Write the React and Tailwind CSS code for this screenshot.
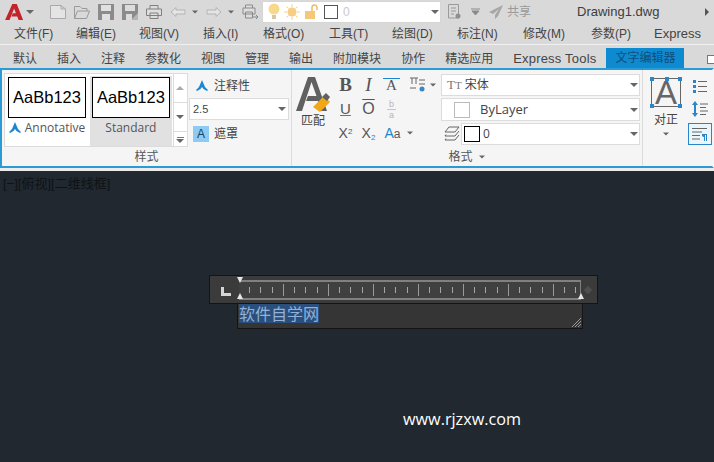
import React from "react";

const menus = [
  { label: "文件(F)", w: "w-[62px]" },
  { label: "编辑(E)", w: "w-[63px]" },
  { label: "视图(V)", w: "w-[64px]" },
  { label: "插入(I)", w: "w-[60px]" },
  { label: "格式(O)", w: "w-[66px]" },
  { label: "工具(T)", w: "w-[63px]" },
  { label: "绘图(D)", w: "w-[65px]" },
  { label: "标注(N)", w: "w-[66px]" },
  { label: "修改(M)", w: "w-[68px]" },
  { label: "参数(P)", w: "w-[63px]" },
  { label: "Express", w: "w-[60px] text-[13px]" },
];
const tabs = ["默认", "插入", "注释", "参数化", "视图", "管理", "输出", "附加模块", "协作", "精选应用", "Express Tools"];

function Caret({ className = "" }) {
  return <span className={`block w-0 h-0 border-x-[4px] border-x-transparent border-t-[4px] border-t-[#666] ${className}`} />;
}

function Svg({ w = 16, h = 16, children, className = "" }) {
  return (
    <svg width={w} height={h} viewBox={`0 0 ${w} ${h}`} fill="none" className={`block shrink-0 ${className}`}>
      {children}
    </svg>
  );
}

function AnnoIcon({ size = 12 }) {
  return (
    <svg width={size} height={size} viewBox="0 0 12 12" className="block shrink-0">
      <path d="M6 0 L9 7 L12 10 L11 11 L7.5 9 L6 7 L4.5 9 L1 11 L0 10 L3 7 Z" fill="#1b87d1" />
    </svg>
  );
}

function QuickBar() {
  return (
    <div className="flex items-center h-[23px]">
      <svg width="20" height="18" viewBox="0 0 22 20" className="block ml-[5px] shrink-0">
        <path d="M0 19 L8 1 L13 1 L20 19 L15 19 L13.5 15 L7 15 L8.5 11.5 L12 11.5 L10 6 L5 19 Z" fill="#c3242b" />
      </svg>
      <Caret className="ml-[1px]" />
      <Svg w={16} h={14} className="ml-[16px]">
        <path d="M0.5 0.5 H11 L15.5 4 V13.5 H0.5 Z M11 0.5 V4 H15.5" stroke="#a9a9a9" fill="#e4e4e4" />
      </Svg>
      <Svg w={16} h={14} className="ml-[8px]">
        <path d="M0.5 13.5 V1.5 H6 L8 3.5 H13 V6 M0.5 13.5 L3.5 6 H15.5 L12.5 13.5 Z" stroke="#9a9a9a" />
      </Svg>
      <Svg w={16} h={16} className="ml-[8px]">
        <path d="M0 0 H16 V16 H0 Z" fill="#8b8b8b" />
        <path d="M3 1 H13 V7 H3 Z M4 10 H12 V16 H4 Z" fill="#e0e0e0" />
      </Svg>
      <Svg w={16} h={16} className="ml-[8px]">
        <path d="M0 0 H16 V16 H0 Z" fill="#8b8b8b" />
        <path d="M3 1 H13 V7 H3 Z M4 10 H10 V16 H4 Z" fill="#dcdcdc" />
        <path d="M10 15 L16 9 V16 H10 Z" fill="#b5b5b5" />
      </Svg>
      <Svg w={16} h={16} className="ml-[8px]">
        <path d="M4 5 V1.5 H12 V5 M0.5 5 H15.5 V11.5 H0.5 Z M4 9 H12 V14.5 H4 Z" stroke="#808080" fill="#dedede" />
      </Svg>
      <Svg w={16} h={12} className="ml-[8px]">
        <path d="M1 6 L6 1.5 V4 H15 V8 H6 V10.5 Z" stroke="#b4b4b4" fill="#e4e4e4" />
      </Svg>
      <Caret className="ml-[5px] scale-75" />
      <Svg w={16} h={12} className="ml-[7px]">
        <path d="M15 6 L10 1.5 V4 H1 V8 H10 V10.5 Z" stroke="#b4b4b4" fill="#e4e4e4" />
      </Svg>
      <Caret className="ml-[5px] scale-75" />
      <Svg w={16} h={16} className="ml-[7px]">
        <path d="M3.5 4 V1 H10.5 V4 M1 4 H13 V10 H1 Z M3.5 8 H10.5 V14 H3.5 Z" stroke="#8a8a8a" fill="#dedede" />
        <path d="M11 13 H16 M14 11 L16 13 L14 15" stroke="#7b8b99" />
      </Svg>
      <div className="ml-[4px] w-[179px] h-[22px] bg-white border border-[#d6d6d6] flex items-center shrink-0">
        <Svg w={14} h={17} className="ml-[4px]">
          <circle cx="7" cy="6" r="5.5" fill="#f8d98c" />
          <path d="M5 12 H9 V16 H5 Z" fill="#d3c7a6" />
        </Svg>
        <Svg w={16} h={16} className="ml-[3px]">
          <circle cx="8" cy="8" r="4.5" fill="#f7cf84" />
          <path d="M8 0 V3 M8 13 V16 M0 8 H3 M13 8 H16 M2.5 2.5 L4.5 4.5 M11.5 11.5 L13.5 13.5 M13.5 2.5 L11.5 4.5 M4.5 11.5 L2.5 13.5" stroke="#f7cf84" />
        </Svg>
        <Svg w={15} h={16} className="ml-[4px]">
          <path d="M1 7 H11 V15 H1 Z" fill="#f4c878" />
          <path d="M8 7 V3.5 A2.5 2.5 0 0 1 13 3.5 V6" stroke="#eebb62" strokeWidth="1.5" />
        </Svg>
        <span className="ml-[5px] w-[14px] h-[14px] border border-[#555] bg-white shrink-0" />
        <span className="ml-[5px] text-[12px] text-[#c9c9c9]">0</span>
        <Caret className="ml-auto mr-[1px]" />
      </div>
      <Svg w={15} h={17} className="ml-[6px]">
        <path d="M1.5 1.5 H11.5 V15 H1.5 Z M4 5 H9 M4 8 H9 M4 11 H7" stroke="#9a9a9a" />
        <circle cx="11" cy="13" r="2.5" fill="#8f8f8f" />
      </Svg>
      <Svg w={9} h={8} className="ml-[9px]">
        <path d="M0 1 H9 M1 3 H8 L4.5 7 Z" stroke="#8a8a8a" fill="#8a8a8a" />
      </Svg>
      <Svg w={14} h={14} className="ml-[9px]">
        <path d="M14 0 L0 7 L4 9 L10 4 L6 10 L6 14 L9 11 Z" fill="#a6a6a6" />
      </Svg>
      <span className="ml-[4px] text-[12px] text-[#9a9a9a] whitespace-nowrap">共享</span>
      <span className="ml-[46px] text-[13px] text-[#3d3d3d] whitespace-nowrap">Drawing1.dwg</span>
      <span className="ml-auto mr-[5px] w-0 h-0 border-y-[4px] border-y-transparent border-l-[4px] border-l-[#555]" />
    </div>
  );
}

function MenuBar() {
  return (
    <div className="flex items-center h-[22px] pl-[14px] border-b border-[#f0f0f0] text-[12px] text-[#444] whitespace-nowrap">
      {menus.map((m) => (
        <span key={m.label} className={`block shrink-0 ${m.w}`}>{m.label}</span>
      ))}
    </div>
  );
}

function TabBar() {
  return (
    <div className="flex items-end h-[23px] pl-[13px] text-[12px] text-[#444] whitespace-nowrap">
      <div className="flex gap-[20px] h-[19px] items-center">
        {tabs.map((t) => (
          <span key={t} className={t === "Express Tools" ? "text-[13px] tracking-[0.2px]" : ""}>{t}</span>
        ))}
      </div>
      <span className="ml-[10px] w-[78px] h-[20px] bg-[#0e8ad1] text-[#0f4f7a] flex items-center justify-center shrink-0">文字编辑器</span>
      <span className="ml-[23px] mb-[4px] w-[12px] h-[9px] border border-[#777] bg-white shrink-0" />
    </div>
  );
}

function StyleCard({ label, active, anno }) {
  return (
    <div className={`w-[82px] h-[70px] px-[2px] pt-[1px] flex flex-col items-center ${active ? "bg-[#e1e1e1]" : ""}`}>
      <div className="w-[78px] h-[41px] bg-white border border-black flex items-center justify-center text-[16.5px] text-black font-['Liberation_Sans',sans-serif]">
        AaBb123
      </div>
      <div className="mt-[1px] flex items-center gap-[4px] text-[12px] text-[#555] font-['Open_Sans',sans-serif]">
        {anno && <AnnoIcon />}
        {label}
      </div>
    </div>
  );
}

function StylePanel() {
  return (
    <div className="w-[290px] shrink-0 border-r border-[#dcdcdc] flex flex-col">
      <div className="flex h-[80px] pt-[3px] pl-[2px]">
        <div className="w-[184px] h-[74px] border border-[#dcdcdc] bg-white flex pt-[2px] pl-[1px] overflow-hidden shrink-0">
          <StyleCard label="Annotative" anno />
          <div className="w-[2px]" />
          <StyleCard label="Standard" active />
          <div className="ml-[1px] -mt-[2px] w-[15px] h-[74px] flex flex-col border-l border-[#dcdcdc]">
            <div className="h-[29px] border-b border-[#dcdcdc] flex items-center justify-center">
              <span className="w-0 h-0 border-x-[4px] border-x-transparent border-b-[4px] border-b-[#aaa]" />
            </div>
            <div className="h-[29px] border-b border-[#dcdcdc] flex items-center justify-center"><Caret /></div>
            <div className="flex-1 flex flex-col items-center justify-center gap-[1px]">
              <span className="w-[7px] h-px bg-[#777]" />
              <Caret />
            </div>
          </div>
        </div>
        <div className="ml-px w-[100px] flex flex-col">
          <div className="h-[25px] flex items-center pl-[7px] gap-[6px] text-[12px] text-[#444]">
            <AnnoIcon />
            注释性
          </div>
          <div className="h-[22px] border border-[#dcdcdc] bg-white flex items-center pl-[3px] pr-[2px] text-[11px] text-[#444]">
            2.5
            <Caret className="ml-auto" />
          </div>
          <div className="mt-[4px] h-[20px] flex items-center pl-[4px] gap-[5px] text-[12px] text-[#444]">
            <span className="w-[16px] h-[16px] bg-[#8ecbf3] flex items-center justify-center text-[#1a3f60] text-[12px] font-['Liberation_Sans',sans-serif]">A</span>
            遮罩
          </div>
        </div>
      </div>
      <div className="flex-1 flex items-center justify-center text-[12px] text-[#555] pt-[1px]">样式</div>
    </div>
  );
}

function SmallBtn({ children }) {
  return <div className="w-[23px] h-[24px] flex items-center justify-center text-[#555] font-['Liberation_Serif',serif]">{children}</div>;
}

function Combo({ children, h = "h-[22px]" }) {
  return (
    <div className={`${h} border border-[#dcdcdc] bg-white flex items-center text-[12px] text-[#444]`}>
      {children}
      <Caret className="ml-auto mr-[1px]" />
    </div>
  );
}

function FormatPanel() {
  return (
    <div className="w-[351px] shrink-0 border-r border-[#dcdcdc] flex flex-col">
      <div className="flex h-[80px]">
        <div className="w-[42px] shrink-0 flex flex-col items-center pt-[6px]">
          <svg width="34" height="36" viewBox="0 0 34 36" className="block">
            <path d="M0 35 L12 1 L19 1 L31 35 L25 35 L22 25 L10 25 L12 20 L20.5 20 L15.5 6 L6 35 Z" fill="#606060" />
            <path d="M17 31 L28 20 L34 26 L24 36 Z" fill="#f0a818" />
            <path d="M26 21 L30 17 L34 21 L31 25 Z" fill="#606060" />
          </svg>
          <span className="text-[12px] text-[#444]">匹配</span>
        </div>
        <div className="w-[107px] shrink-0 pt-[3px] flex flex-col">
          <div className="flex h-[24px] items-center">
            <SmallBtn><span className="text-[19px] font-bold">B</span></SmallBtn>
            <SmallBtn><span className="text-[19px] italic">I</span></SmallBtn>
            <SmallBtn><span className="text-[15px] border-t border-[#1b87d1] leading-[13px] px-[3px]">A</span></SmallBtn>
            <Svg w={18} h={18} className="ml-[6px]">
              <path d="M1 2 H9 M3 2 V8 M7 2 V8 M10 4 H16 M10 8 H16 M1 12 H7" stroke="#666" />
              <circle cx="13" cy="13" r="2.5" fill="#3a87c4" />
            </Svg>
            <Caret className="ml-[2px] scale-75" />
          </div>
          <div className="flex h-[24px] items-center">
            <SmallBtn><span className="text-[15px] underline decoration-[#1b87d1] font-['Liberation_Sans',sans-serif]">U</span></SmallBtn>
            <SmallBtn><span className="text-[16px] overline font-['Liberation_Sans',sans-serif]">O</span></SmallBtn>
            <div className="w-[23px] flex flex-col items-center text-[9px] leading-[8px] text-[#b5b5b5] font-['Liberation_Sans',sans-serif]">
              <span className="border-b border-[#c5c5c5] px-[2px] pb-[1px]">b</span>
              <span className="pt-[1px]">a</span>
            </div>
          </div>
          <div className="flex h-[24px] items-center font-['Liberation_Sans',sans-serif] text-[#555]">
            <SmallBtn><span className="font-['Liberation_Sans',sans-serif] text-[14px]">X<sup className="text-[8px]">2</sup></span></SmallBtn>
            <SmallBtn><span className="font-['Liberation_Sans',sans-serif] text-[14px]">X<sub className="text-[8px] text-[#1b87d1]">2</sub></span></SmallBtn>
            <div className="w-[25px] text-[14px] flex items-baseline justify-center"><span className="text-[#1b87d1]">A</span><span className="text-[12px]">a</span></div>
            <Caret className="ml-[1px] scale-75" />
          </div>
        </div>
        <div className="w-[199px] shrink-0 pt-[4px] flex flex-col gap-[2px]">
          <Combo>
            <span className="ml-[5px] text-[13px] text-[#777] font-['Liberation_Serif',serif]">T<span className="text-[11px]">T</span></span>
            <span className="ml-[3px]">宋体</span>
          </Combo>
          <Combo h="h-[23px]">
            <span className="ml-[12px] w-[16px] h-[16px] border border-[#bbb] bg-white" />
            <span className="ml-[10px] text-[13px] font-['Open_Sans',sans-serif]">ByLayer</span>
          </Combo>
          <div className="flex h-[22px]">
            <Svg w={16} h={15} className="ml-[3px] mr-[1px] mt-[3px]">
              <path d="M5 1 H15 L11 6 H1 Z" stroke="#666" />
              <path d="M2 8.5 L1 10 H11 L15 5" stroke="#666" />
              <path d="M2 12.5 L1 14 H11 L15 9" stroke="#666" />
            </Svg>
            <div className="flex-1">
              <Combo>
                <span className="ml-[2px] w-[16px] h-[16px] border border-black bg-white" />
                <span className="ml-[3px] font-['Open_Sans',sans-serif]">0</span>
              </Combo>
            </div>
          </div>
        </div>
      </div>
      <div className="flex-1 flex items-center justify-center gap-[5px] text-[12px] text-[#555]">
        格式
        <Caret className="scale-75" />
      </div>
    </div>
  );
}

function ParagraphPanel() {
  return (
    <div className="flex-1 flex pl-[4px]">
      <div className="w-[38px] flex flex-col items-center pt-[8px]">
        <div className="relative w-[30px] h-[29px] border border-[#666] flex items-center justify-center text-[33px] leading-none text-[#666] font-['Liberation_Sans',sans-serif]">
          A
          <span className="absolute -left-[2px] -top-[2px] w-[4px] h-[4px] bg-[#2a86c8]" />
          <span className="absolute left-[13px] -top-[2px] w-[4px] h-[4px] bg-[#2a86c8]" />
          <span className="absolute -right-[2px] -top-[2px] w-[4px] h-[4px] bg-[#2a86c8]" />
          <span className="absolute -left-[2px] -bottom-[2px] w-[4px] h-[4px] bg-[#2a86c8]" />
          <span className="absolute -right-[2px] -bottom-[2px] w-[4px] h-[4px] bg-[#2a86c8]" />
        </div>
        <span className="mt-[6px] text-[12px] leading-[14px] text-[#444]">对正</span>
        <Caret className="mt-[5px] scale-75" />
      </div>
      <div className="ml-[3px] flex flex-col items-center pt-[10px] w-[24px]">
        <Svg w={14} h={13}>
          <path d="M0 0 H3 V3 H0 Z M0 5 H3 V8 H0 Z M0 10 H3 V13 H0 Z" fill="#2a86c8" />
          <path d="M5 1.5 H14 M5 6.5 H14 M5 11.5 H14" stroke="#666" />
        </Svg>
        <Svg w={16} h={16} className="mt-[8px]">
          <path d="M3 0 L6 4 H4 V12 H6 L3 16 L0 12 H2 V4 H0 Z" fill="#2a86c8" />
          <path d="M8 3 H16 M8 6.5 H14 M8 10 H16 M8 13.5 H14" stroke="#666" />
        </Svg>
        <div className="mt-[6px] w-[24px] h-[22px] border border-[#2a86c8] bg-[#eaf5fc] flex items-center justify-center shrink-0">
          <Svg w={16} h={14}>
            <path d="M0 1.5 H15 M0 5 H10 M0 8.5 H8 M0 12 H8" stroke="#666" />
            <path d="M10 7 H15 V14 H14 V8 H13 V14 H12 V10 Q9.5 9.5 10 7 Z" fill="#2a86c8" />
          </Svg>
        </div>
      </div>
    </div>
  );
}

function Ruler() {
  const ticks = Array.from({ length: 30 }, (_, i) => i);
  return (
    <div className="relative w-[342px] h-[20px] border-y-2 border-[#808080] border-r border-r-[#808080] bg-[#404040] flex items-center pl-[10px] gap-[10.25px]">
      {ticks.map((i) => (
        <span key={i} className={(i + 1) % 4 === 0 ? "w-px h-[12px] bg-[#9a9a9a] shrink-0" : "w-px h-[6px] bg-[#a5a5a5] shrink-0"} />
      ))}
    </div>
  );
}

function TextEditor() {
  return (
    <div className="absolute left-[209px] top-[104px] w-[389px]">
      <div className="relative h-[29px] bg-[#3b3b3b] border border-[#141414] flex items-center pl-[29px]">
        <Svg w={10} h={9} className="absolute left-[11px] top-[11px]">
          <path d="M0 0 H3 V6 H10 V9 H0 Z" fill="#d5d5d5" />
        </Svg>
        <Ruler />
        <span className="absolute left-[27px] top-[1px] w-0 h-0 border-x-[3px] border-x-transparent border-t-[6px] border-t-[#e5e5e5]" />
        <span className="absolute left-[27px] top-[17px] w-0 h-0 border-x-[3px] border-x-transparent border-b-[6px] border-b-[#e5e5e5]" />
        <span className="absolute left-[368px] top-[17px] w-0 h-0 border-x-[3px] border-x-transparent border-b-[6px] border-b-[#e5e5e5]" />
        <span className="absolute left-[375px] top-[11px] w-[6px] h-[6px] rotate-45 bg-[#4e4e4e]" />
      </div>
      <div className="relative ml-[28px] w-[346px] h-[25px] bg-[#353535] border border-[#141414] border-t-0">
        <span className="block w-fit ml-px bg-[#2a4f7d] text-[#93b2d6] text-[16px] leading-[19px] font-['Noto_Sans_CJK_SC',sans-serif]">软件自学网</span>
        <Svg w={9} h={9} className="absolute right-[1px] bottom-[1px]">
          <path d="M0 9 L9 0 M3 9 L9 3 M6 9 L9 6" stroke="#9a9a9a" />
        </Svg>
      </div>
    </div>
  );
}

export default function App() {
  return (
    <div className="w-[714px] h-[462px] overflow-hidden flex flex-col bg-[#212830] font-['Liberation_Sans','Noto_Sans_CJK_SC',sans-serif]">
      <div className="bg-[#d9d9d9]">
        <QuickBar />
        <MenuBar />
        <TabBar />
      </div>
      <div className="h-[100px] bg-[#f5f5f5] border-y-2 border-x-2 border-x-[#f5f5f5] border-y-[#2b9bd6] border-l-[#2b9bd6] flex shrink-0">
        <StylePanel />
        <FormatPanel />
        <ParagraphPanel />
      </div>
      <div className="h-[3px] bg-[#ececec] shrink-0" />
      <div className="relative flex-1">
        <span className="block pl-[3px] pt-[5px] text-[13px] leading-[16px] text-[#0e1216]">[−][俯视][二维线框]</span>
        <TextEditor />
        <span className="absolute left-[403px] top-[236px] text-[16.2px] text-white font-['Open_Sans',sans-serif]">www.rjzxw.com</span>
      </div>
    </div>
  );
}
